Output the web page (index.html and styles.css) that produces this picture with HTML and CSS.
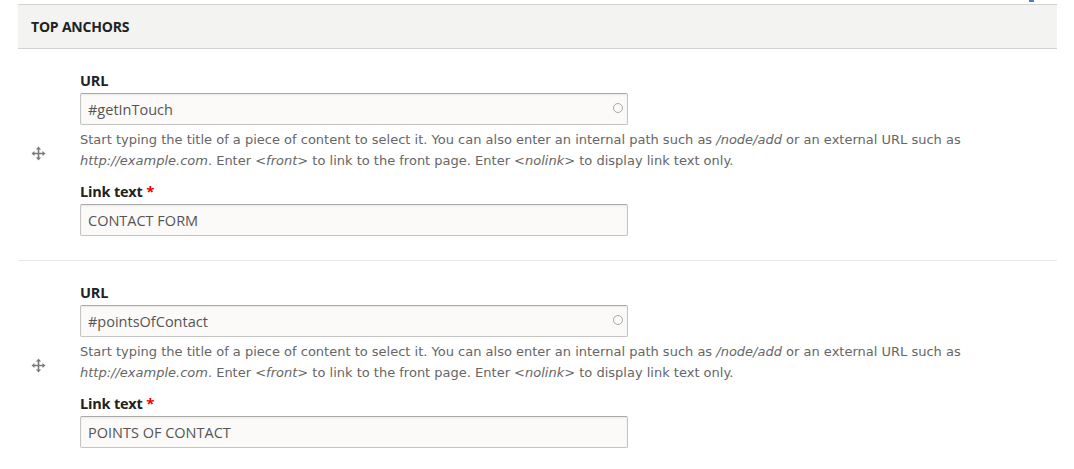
FILE: index.html
```html
<!DOCTYPE html>
<html lang="en">
<head>
  <meta charset="UTF-8">
  <title>Top anchors</title>
  <link rel="stylesheet" href="styles.css">
</head>
<body>
  <div class="top-strip"><span class="cut-link"></span></div>
  <div class="field-table">
    <div class="table-head">TOP ANCHORS</div>

    <div class="drag-row">
      <div class="handle">
        <svg width="15" height="15" viewBox="0 0 15 15">
          <path d="M7.5 3v9M3 7.5h9" stroke="#7a7a7a" stroke-width="1.6"/>
          <path d="M7.5 0.5l-2.6 3h5.2zM7.5 14.5l-2.6-3h5.2zM0.5 7.5l3-2.6v5.2zM14.5 7.5l-3-2.6v5.2z" fill="#7a7a7a"/>
        </svg>
      </div>
      <div class="row-fields">
        <label class="field-label">URL</label>
        <div class="auto-input">
          <input class="text-input" type="text" value="#getInTouch">
          <span class="throbber"></span>
        </div>
        <div class="description">Start typing the title of a piece of content to select it. You can also enter an internal path such as <em>/node/add</em> or an external URL such as <em>http://example.com</em>. Enter <em>&lt;front&gt;</em> to link to the front page. Enter <em>&lt;nolink&gt;</em> to display link text only.</div>
        <label class="field-label second">Link text <span class="req">*</span></label>
        <input class="text-input" type="text" value="CONTACT FORM">
      </div>
    </div>

    <div class="drag-row">
      <div class="handle">
        <svg width="15" height="15" viewBox="0 0 15 15">
          <path d="M7.5 3v9M3 7.5h9" stroke="#7a7a7a" stroke-width="1.6"/>
          <path d="M7.5 0.5l-2.6 3h5.2zM7.5 14.5l-2.6-3h5.2zM0.5 7.5l3-2.6v5.2zM14.5 7.5l-3-2.6v5.2z" fill="#7a7a7a"/>
        </svg>
      </div>
      <div class="row-fields">
        <label class="field-label">URL</label>
        <div class="auto-input">
          <input class="text-input" type="text" value="#pointsOfContact">
          <span class="throbber"></span>
        </div>
        <div class="description">Start typing the title of a piece of content to select it. You can also enter an internal path such as <em>/node/add</em> or an external URL such as <em>http://example.com</em>. Enter <em>&lt;front&gt;</em> to link to the front page. Enter <em>&lt;nolink&gt;</em> to display link text only.</div>
        <label class="field-label second">Link text <span class="req">*</span></label>
        <input class="text-input" type="text" value="POINTS OF CONTACT">
      </div>
    </div>
  </div>
</body>
</html>
```

FILE: styles.css
```css
body {
  margin: 0;
  background: #fff;
  font-family: "Open Sans", "DejaVu Sans", sans-serif;
  color: #333;
}
.top-strip {
  height: 4px;
  display: flex;
  justify-content: flex-end;
  padding-right: 40px;
}
.cut-link {
  width: 5px;
  height: 2px;
  background: #4a7fc1;
}
.field-table {
  margin-left: 18px;
  width: 1039px;
}
.table-head {
  height: 43px;
  line-height: 43px;
  background: #f3f3f2;
  border-top: 1px solid #d2d2d0;
  border-bottom: 1px solid #d2d2d0;
  padding-left: 13px;
  font-size: 14px;
  font-weight: bold;
  letter-spacing: -0.2px;
  color: #222;
}
.drag-row {
  display: flex;
  align-items: center;
  border-bottom: 1px solid #e6e6e4;
  padding: 22px 0 24px;
}
.handle {
  width: 62px;
  padding-left: 13px;
  box-sizing: border-box;
  display: flex;
}
.row-fields {
  flex: 1;
}
.field-label {
  display: block;
  font-size: 14.5px;
  font-weight: bold;
  line-height: 19px;
  margin-bottom: 3px;
  letter-spacing: -0.2px;
  color: #222;
}
.field-label.second {
  margin-top: 11px;
}
.req {
  color: #e00;
  font-size: 15px;
}
.auto-input {
  position: relative;
  width: 548px;
}
.text-input {
  display: block;
  box-sizing: border-box;
  width: 548px;
  height: 32px;
  margin: 0;
  padding: 0 7px;
  font-family: "Open Sans", sans-serif;
  font-size: 14.5px;
  color: #555;
  background: #fbfaf8;
  border: 1px solid #c4c4c2;
  border-top-color: #a9a9a7;
  border-radius: 2px;
  box-shadow: inset 0 1px 2px rgba(0, 0, 0, 0.08);
}
.throbber {
  position: absolute;
  right: 5px;
  top: 10px;
  width: 8px;
  height: 8px;
  border: 1.6px solid #a8a8a8;
  border-radius: 50%;
}
.description {
  margin-top: 4px;
  font-family: "DejaVu Sans", sans-serif;
  font-size: 13px;
  line-height: 21px;
  color: #666;
  max-width: 960px;
}
.description em {
  font-style: italic;
}
```
